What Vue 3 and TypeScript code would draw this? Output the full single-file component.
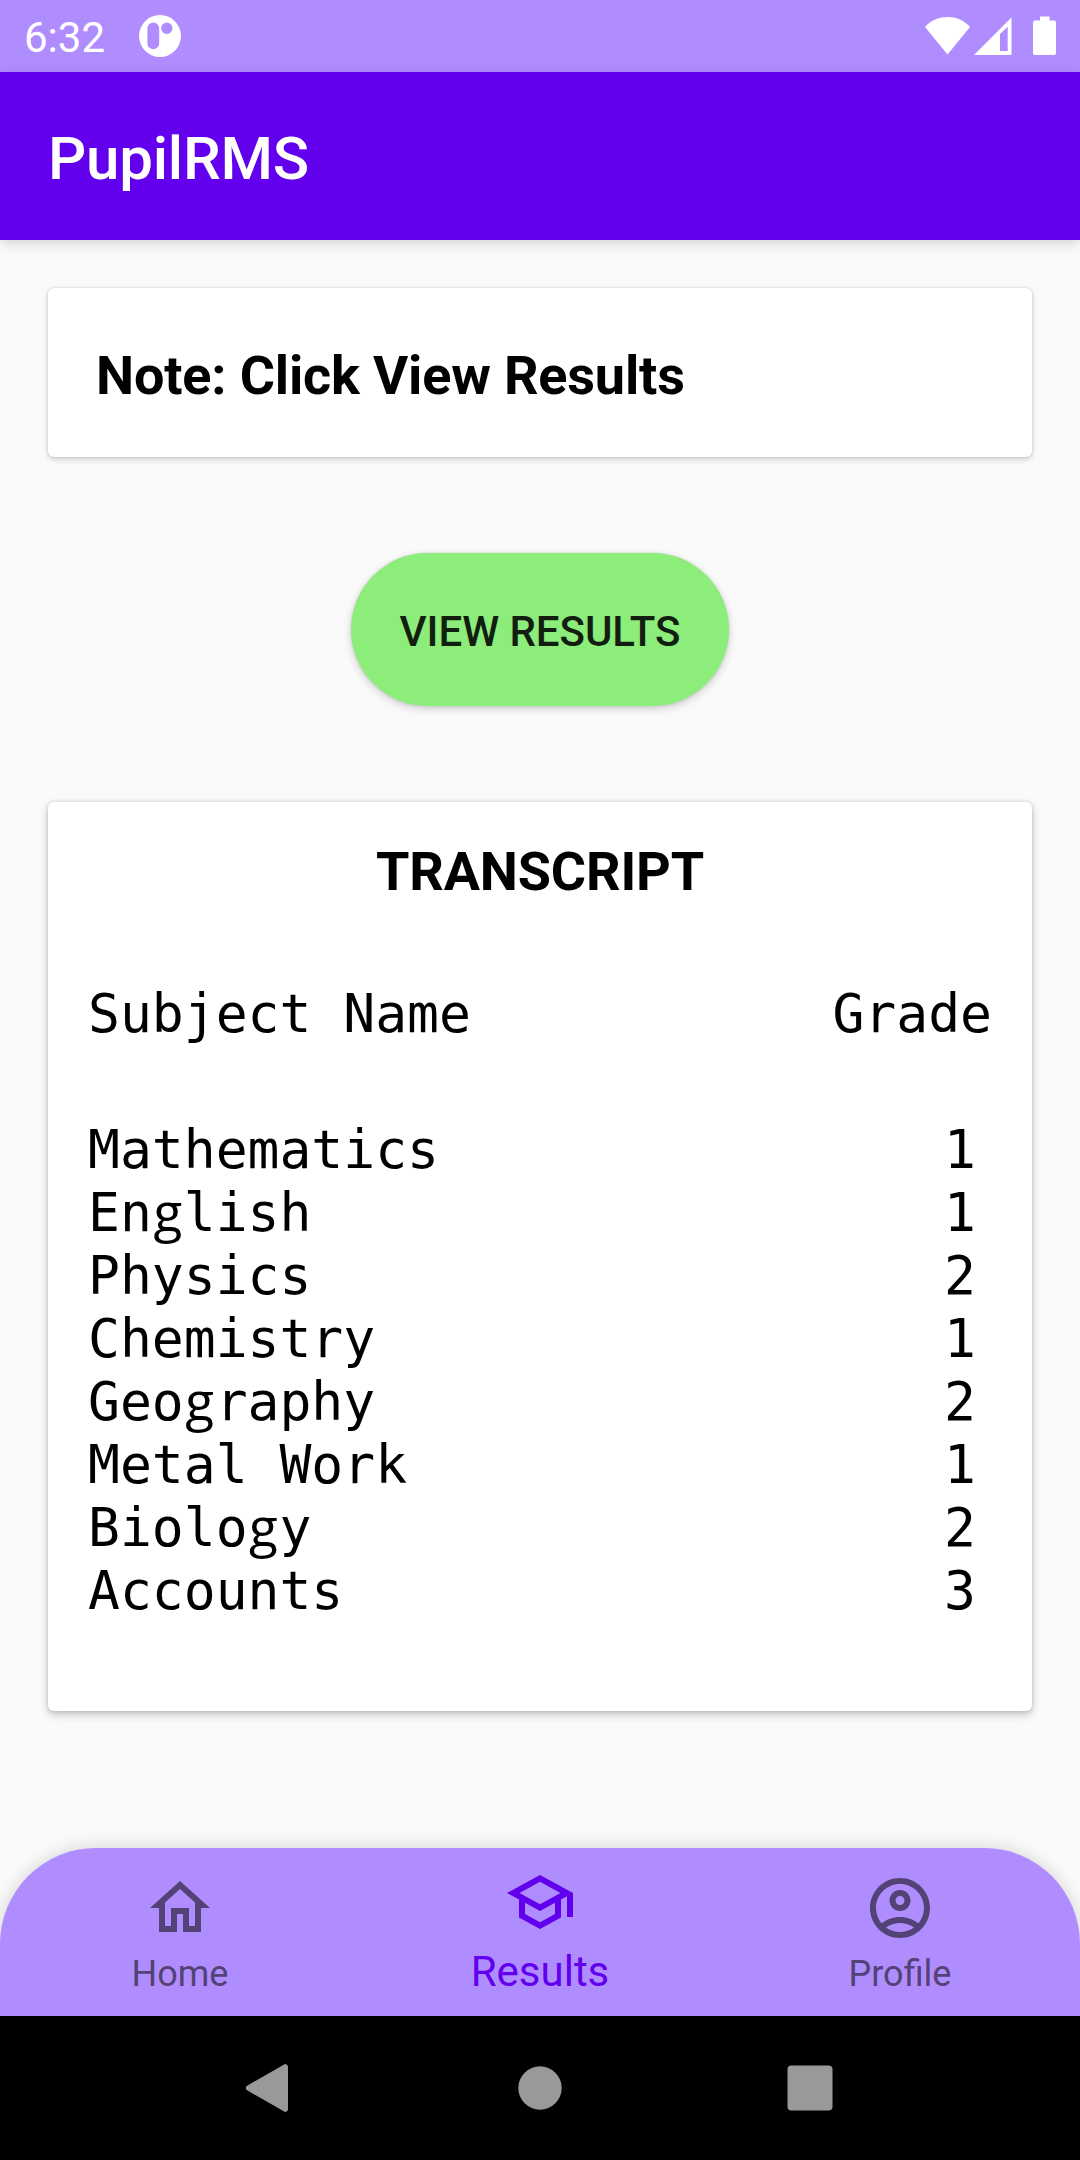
<script setup lang="ts">
interface Subject {
  name: string
  grade: number
}

interface Tab {
  label: string
  active: boolean
  icon: string
}

const subjects: Subject[] = [
  { name: 'Mathematics', grade: 1 },
  { name: 'English', grade: 1 },
  { name: 'Physics', grade: 2 },
  { name: 'Chemistry', grade: 1 },
  { name: 'Geography', grade: 2 },
  { name: 'Metal Work', grade: 1 },
  { name: 'Biology', grade: 2 },
  { name: 'Accounts', grade: 3 },
]

const tabs: Tab[] = [
  {
    label: 'Home',
    active: false,
    icon: 'M12 5.69l5 4.5V18h-2v-6H9v6H7v-7.81l5-4.5M12 3L2 12h3v8h6v-6h2v6h6v-8h3L12 3z',
  },
  {
    label: 'Results',
    active: true,
    icon: 'M12 3L1 9l4 2.18v6L12 21l7-3.82v-6l2-1.09V17h2V9L12 3zm6.82 6L12 12.72 5.18 9 12 5.28 18.82 9zM17 15.99l-5 2.73-5-2.73v-3.72L12 15l5-2.73v3.72z',
  },
  {
    label: 'Profile',
    active: false,
    icon: 'M12 2C6.48 2 2 6.48 2 12s4.48 10 10 10 10-4.48 10-10S17.52 2 12 2zM7.35 18.5C8.66 17.56 10.26 17 12 17s3.34.56 4.65 1.5C15.34 19.44 13.74 20 12 20s-3.34-.56-4.65-1.5zm10.79-1.38C16.45 15.8 14.32 15 12 15s-4.45.8-6.14 2.12C4.7 15.73 4 13.95 4 12c0-4.42 3.58-8 8-8s8 3.58 8 8c0 1.95-.7 3.73-1.86 5.12zM12 6c-1.93 0-3.5 1.57-3.5 3.5S10.07 13 12 13s3.5-1.57 3.5-3.5S13.93 6 12 6zm0 5c-.83 0-1.5-.67-1.5-1.5S11.17 8 12 8s1.5.67 1.5 1.5S12.83 11 12 11z',
  },
]

// The double-storey "g" is set in its own face, so names are split around it.
const pieces = (name: string): string[] => name.split(/(g)/).filter((p) => p !== '')
</script>

<template>
  <div class="screen">
    <header class="status">
      <span class="time">6:32</span>
      <svg class="notif" viewBox="0 0 42 42" width="42" height="42">
        <path
          fill="#fff"
          fill-rule="evenodd"
          d="M21 0a21 21 0 1 1 0 42a21 21 0 0 1 0-42zM14.3 7.5a5.9 5.9 0 0 0-5.9 5.9v15a5.9 5.9 0 0 0 11.8 0v-15a5.9 5.9 0 0 0-5.9-5.9zM27.8 7.5a5.7 5.7 0 1 0 0 11.4a5.7 5.7 0 0 0 0-11.4z"
        />
      </svg>
      <svg class="indicators" viewBox="0 0 132 40" width="132" height="40">
        <path fill="#fff" d="M0 11C6 4 14 1 22.5 1S39 4 45 11L22.5 38.500z" />
        <path fill="#fff" fill-rule="evenodd" d="M86.5 1.500V39H49zM75 18V35H82.700V10.800z" />
        <path
          fill="#fff"
          d="M115 0.500h9.500v4h4.500a2 2 0 0 1 2 2v30.500a2 2 0 0 1-2 2h-19a2 2 0 0 1-2-2v-30.500a2 2 0 0 1 2-2h5z"
        />
      </svg>
    </header>

    <div class="appbar"><h1>PupilRMS</h1></div>

    <main class="content">
      <section class="card note">Note: Click View Results</section>

      <button class="view" type="button">VIEW RESULTS</button>

      <section class="card transcript">
        <h2>TRANSCRIPT</h2>
        <div class="row head">
          <span>Subject Name</span>
          <span>Grade</span>
        </div>
        <div v-for="s in subjects" :key="s.name" class="row">
          <span><span v-for="(p, i) in pieces(s.name)" :key="i" :class="{ gee: p === 'g' }">{{ p }}</span></span>
          <span class="grade">{{ s.grade }}</span>
        </div>
      </section>
    </main>

    <nav class="tabs">
      <a v-for="t in tabs" :key="t.label" class="tab" :class="{ active: t.active }">
        <svg viewBox="0 0 24 24" width="72" height="72"><path fill="currentColor" :d="t.icon" /></svg>
        <span>{{ t.label }}</span>
      </a>
    </nav>

    <footer class="system">
      <svg viewBox="0 0 48 48" width="48" height="48">
        <path fill="#999" d="M42 2.7V45.3a2.6 2.6 0 0 1-4.2 2L.7 26.100a2.600 2.600 0 0 1 0-4.200L37.800.7a2.600 2.600 0 0 1 4.200 2z" />
      </svg>
      <svg viewBox="0 0 48 48" width="48" height="48"><circle cx="24" cy="24" r="21.700" fill="#999" /></svg>
      <svg viewBox="0 0 48 48" width="48" height="48">
        <rect x="1.500" y="1.500" width="45" height="45" rx="4" fill="#999" />
      </svg>
    </footer>
  </div>
</template>

<style>
body {
  margin: 0;
  background: #fafafa;
}
</style>

<style scoped>
.screen {
  width: 1080px;
  height: 2160px;
  display: flex;
  flex-direction: column;
  background: #fafafa;
  font-family: Roboto, "Liberation Sans", sans-serif;
  color: #000;
  overflow: hidden;
}
.status {
  height: 72px;
  box-sizing: border-box;
  padding: 0 23px 0 24px;
  display: flex;
  align-items: center;
  background: #b08dff;
  color: #fff;
}
.time {
  width: 115px;
  padding-top: 3px;
  font-size: 42px;
  line-height: 50px;
}
.indicators {
  margin-left: auto;
}
.appbar {
  height: 168px;
  flex: none;
  box-sizing: border-box;
  padding-left: 48px;
  display: flex;
  align-items: center;
  background: #6200ee;
  color: #fff;
  box-shadow: 0 3px 12px rgba(0, 0, 0, 0.16);
}
h1 {
  margin: 6px 0 0;
  font-size: 60px;
  line-height: 70px;
  font-weight: 500;
  letter-spacing: -0.2px;
}
.content {
  flex: 1;
  display: flex;
  flex-direction: column;
  align-items: center;
  padding: 48px 48px 0;
}
.card {
  width: 984px;
  box-sizing: border-box;
  background: #fff;
  border-radius: 6px;
  box-shadow: 0 0 3px rgba(0, 0, 0, 0.18), 0 3px 6px rgba(0, 0, 0, 0.14);
}
.note {
  height: 169px;
  padding: 56px 48px 0;
  font-size: 54px;
  line-height: 63px;
  font-weight: 700;
  letter-spacing: -0.17px;
}
.view {
  width: 378px;
  height: 153px;
  margin: 96px 0;
  padding: 5px 0 0;
  border: 0;
  border-radius: 77px;
  background: #8ced7a;
  box-shadow: 0 0 3px rgba(0, 0, 0, 0.1), 0 3px 8px rgba(0, 0, 0, 0.18);
  color: #121f10;
  font: 500 42px/50px Roboto, "Liberation Sans", sans-serif;
  letter-spacing: -0.05px;
}
.transcript {
  height: 909px;
  padding: 38px 40px 0;
  box-shadow: 0 0 4px rgba(0, 0, 0, 0.16), 0 4px 8px rgba(0, 0, 0, 0.2);
}
h2 {
  margin: 0 0 79px;
  text-align: center;
  font-size: 54px;
  line-height: 63px;
  font-weight: 700;
  letter-spacing: -0.17px;
}
.row {
  height: 63px;
  display: flex;
  justify-content: space-between;
  font: 53px/63px "DejaVu Sans Mono", "Liberation Mono", monospace;
  white-space: pre;
}
.head {
  margin-bottom: 73px;
}
.gee {
  display: inline-block;
  width: 31.9px;
  font-family: "Open Sans", "DejaVu Sans Mono", monospace;
  line-height: 40px;
  text-align: center;
}
.grade {
  margin-right: 16px;
}
.tabs {
  height: 168px;
  display: flex;
  background: #b08dff;
  border-radius: 96px 96px 0 0;
  box-shadow: 0 0 18px rgba(0, 0, 0, 0.16);
}
.tab {
  flex: 1;
  display: flex;
  flex-direction: column;
  align-items: center;
  padding-top: 24px;
  color: #524275;
  font-size: 36px;
  line-height: 42px;
}
.tab span {
  margin-top: 9px;
}
.tab.active {
  padding-top: 18px;
  color: #6200ee;
  font-size: 42px;
  line-height: 50px;
}
.system {
  height: 144px;
  display: flex;
  justify-content: center;
  align-items: center;
  gap: 222px;
  background: #000;
}
</style>
